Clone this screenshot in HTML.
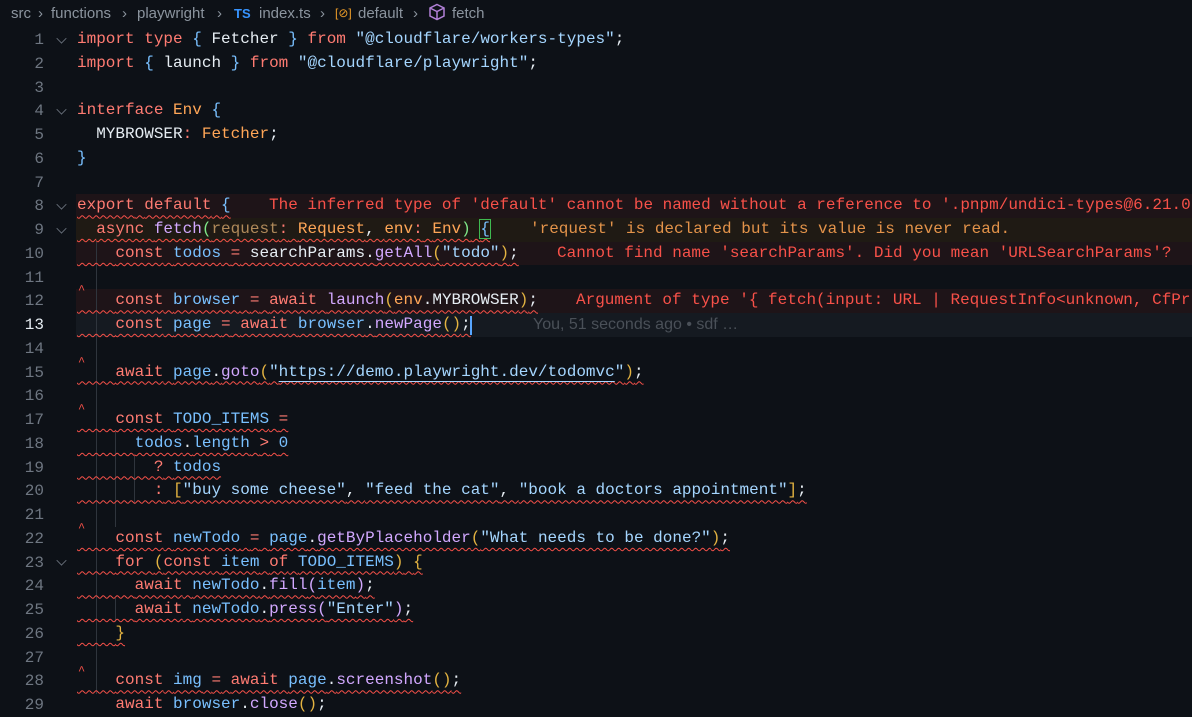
<!DOCTYPE html>
<html><head><meta charset="utf-8"><style>
body{margin:0;width:1192px;height:700px;overflow:hidden;background:#0d1117;font-family:"Liberation Mono",monospace;}
.bc{position:absolute;top:0;left:0;height:26px;width:1192px;font-family:"Liberation Sans",sans-serif;font-size:15px;color:#8b949e;line-height:27px;white-space:nowrap}
.bc span{position:absolute;top:0}
#ed{position:absolute;left:0;top:2px;width:1192px;height:700px}
.ln{position:absolute;left:0;width:44px;text-align:right;color:#6e7681;font-size:16px;height:24px;line-height:24px}
.fold{position:absolute;left:57px;width:8px;height:8px;border-right:1.5px solid #6e7681;border-bottom:1.5px solid #6e7681;transform:rotate(45deg) scale(0.8,0.8)}
.row{position:absolute;left:76px;right:0;height:23.75px}
.code{position:absolute;left:77px;font-size:16px;line-height:23.75px;white-space:pre;color:#e6edf3}
.sq{text-decoration:underline wavy #f85149;text-decoration-thickness:1px;text-underline-offset:5px}
.k{color:#ff7b72}.s{color:#a5d6ff}.v{color:#79c0ff}.f{color:#d2a8ff}.t{color:#ffa657}.y{color:#e3b341}.g{color:#7ee787}.p{color:#d2a8ff}
.msg{position:absolute;font-size:16px;line-height:23.75px;white-space:pre;color:#f85149}
.guide{position:absolute;width:1px;background:#2f353d}
.car{position:absolute;font-size:12px;color:#f85149;left:78px}
</style></head><body>
<div class="bc">
<span style="left:11px">src</span><span style="left:38px">›</span>
<span style="left:51px">functions</span><span style="left:122px">›</span>
<span style="left:137px">playwright</span><span style="left:217px">›</span>
<span style="left:234px;color:#3794ff;font-weight:bold;font-size:13px">TS</span>
<span style="left:259px">index.ts</span><span style="left:320px">›</span>
<span style="left:335px;color:#ee9d28;font-size:12px">[⊘]</span>
<span style="left:358px">default</span><span style="left:413px">›</span>
<span style="left:428px"><svg width="18" height="18" viewBox="0 0 18 18" style="vertical-align:-3px"><path d="M9 1.5 L16 5 V13 L9 16.5 L2 13 V5 Z M2 5 L9 8.5 L16 5 M9 8.5 V16.5" fill="none" stroke="#b180d7" stroke-width="1.5"/></svg></span>
<span style="left:452px">fetch</span>
</div>
<div id="ed">
<div class="row" style="top:192px;background:#1e1418"></div>
<div class="row" style="top:215.75px;background:#1f1a14"></div>
<div class="row" style="top:239.5px;background:#1e1418"></div>
<div class="row" style="top:287px;background:#1e1418"></div>
<div class="row" style="top:310.75px;background:#151a21"></div>

<div class="guide" style="left:96px;top:240px;height:452px"></div>
<div class="guide" style="left:115px;top:430px;height:95px"></div>
<div class="guide" style="left:134px;top:454px;height:48px"></div>
<div class="guide" style="left:115px;top:596px;height:24px"></div>

<div class="ln" style="top:26px">1</div><div class="ln" style="top:50px">2</div><div class="ln" style="top:73.5px">3</div><div class="ln" style="top:97px">4</div><div class="ln" style="top:121px">5</div><div class="ln" style="top:145px">6</div><div class="ln" style="top:168.5px">7</div><div class="ln" style="top:192px">8</div><div class="ln" style="top:216px">9</div><div class="ln" style="top:240px">10</div><div class="ln" style="top:263.5px">11</div><div class="ln" style="top:287px">12</div><div class="ln" style="top:311px;color:#e6edf3">13</div><div class="ln" style="top:335px">14</div><div class="ln" style="top:358.5px">15</div><div class="ln" style="top:382px">16</div><div class="ln" style="top:406px">17</div><div class="ln" style="top:430px">18</div><div class="ln" style="top:453.5px">19</div><div class="ln" style="top:477px">20</div><div class="ln" style="top:501px">21</div><div class="ln" style="top:525px">22</div><div class="ln" style="top:548.5px">23</div><div class="ln" style="top:572px">24</div><div class="ln" style="top:596px">25</div><div class="ln" style="top:620px">26</div><div class="ln" style="top:643.5px">27</div><div class="ln" style="top:667px">28</div><div class="ln" style="top:691px">29</div>

<div class="fold" style="top:32px"></div><div class="fold" style="top:103px"></div><div class="fold" style="top:198px"></div><div class="fold" style="top:222px"></div><div class="fold" style="top:554px"></div>

<div class="code" style="top:26px"><span class="k">import</span> <span class="k">type</span> <span class="v">{</span> Fetcher <span class="v">}</span> <span class="k">from</span> <span class="s">"@cloudflare/workers-types"</span>;</div>
<div class="code" style="top:49.75px"><span class="k">import</span> <span class="v">{</span> launch <span class="v">}</span> <span class="k">from</span> <span class="s">"@cloudflare/playwright"</span>;</div>
<div class="code" style="top:97.25px"><span class="k">interface</span> <span class="t">Env</span> <span class="v">{</span></div>
<div class="code" style="top:121px">  MYBROWSER<span class="k">:</span> <span class="t">Fetcher</span>;</div>
<div class="code" style="top:144.75px"><span class="v">}</span></div>
<div class="code sq" style="top:192.25px"><span class="k">export</span> <span class="k">default</span> <span class="v">{</span></div>
<div class="code sq" style="top:216px">  <span class="k">async</span> <span class="f">fetch</span><span class="g">(</span><span style="color:#b08a5a">request</span><span class="k">:</span> <span class="t">Request</span>, <span class="t">env</span><span class="k">:</span> <span class="t">Env</span><span class="g">)</span> <span class="v" style="outline:1px solid #3fb950">{</span></div>
<div class="code sq" style="top:239.75px">    <span class="k">const</span> <span class="v">todos</span> <span class="k">=</span> searchParams.<span class="f">getAll</span><span class="y">(</span><span class="s">"todo"</span><span class="y">)</span>;</div>
<div class="code sq" style="top:287.25px">    <span class="k">const</span> <span class="v">browser</span> <span class="k">=</span> <span class="k">await</span> <span class="f">launch</span><span class="y">(</span><span class="t">env</span>.MYBROWSER<span class="y">)</span>;</div>
<div class="code sq" style="top:311px">    <span class="k">const</span> <span class="v">page</span> <span class="k">=</span> <span class="k">await</span> <span class="v">browser</span>.<span class="f">newPage</span><span class="y">()</span>;</div>
<div style="position:absolute;left:470px;top:314px;width:2px;height:19px;background:#58a6ff"></div>
<div class="code sq" style="top:358.5px">    <span class="k">await</span> <span class="v">page</span>.<span class="f">goto</span><span class="y">(</span><span class="s">"<u>https://demo.playwright.dev/todomvc</u>"</span><span class="y">)</span>;</div>
<div class="code sq" style="top:406px">    <span class="k">const</span> <span class="v">TODO_ITEMS</span> <span class="k">=</span></div>
<div class="code sq" style="top:429.75px">      <span class="v">todos</span>.<span class="v">length</span> <span class="k">&gt;</span> <span class="v">0</span></div>
<div class="code sq" style="top:453.5px">        <span class="k">?</span> <span class="v">todos</span></div>
<div class="code sq" style="top:477.25px">        <span class="k">:</span> <span class="y">[</span><span class="s">"buy some cheese"</span>, <span class="s">"feed the cat"</span>, <span class="s">"book a doctors appointment"</span><span class="y">]</span>;</div>
<div class="code sq" style="top:524.75px">    <span class="k">const</span> <span class="v">newTodo</span> <span class="k">=</span> <span class="v">page</span>.<span class="f">getByPlaceholder</span><span class="y">(</span><span class="s">"What needs to be done?"</span><span class="y">)</span>;</div>
<div class="code sq" style="top:548.5px">    <span class="k">for</span> <span class="y">(</span><span class="k">const</span> <span class="v">item</span> <span class="k">of</span> <span class="v">TODO_ITEMS</span><span class="y">)</span> <span class="y">{</span></div>
<div class="code sq" style="top:572.25px">      <span class="k">await</span> <span class="v">newTodo</span>.<span class="f">fill</span><span class="p">(</span><span class="v">item</span><span class="p">)</span>;</div>
<div class="code sq" style="top:596px">      <span class="k">await</span> <span class="v">newTodo</span>.<span class="f">press</span><span class="p">(</span><span class="s">"Enter"</span><span class="p">)</span>;</div>
<div class="code sq" style="top:619.75px">    <span class="y">}</span></div>
<div class="code sq" style="top:667.25px">    <span class="k">const</span> <span class="v">img</span> <span class="k">=</span> <span class="k">await</span> <span class="v">page</span>.<span class="f">screenshot</span><span class="y">()</span>;</div>
<div class="code" style="top:691px">    <span class="k">await</span> <span class="v">browser</span>.<span class="f">close</span><span class="y">()</span>;</div>

<div class="car" style="top:281px">^</div><div class="car" style="top:353px">^</div><div class="car" style="top:400px">^</div><div class="car" style="top:519px">^</div><div class="car" style="top:662px">^</div>

<div class="msg" style="left:269px;top:192.25px">The inferred type of 'default' cannot be named without a reference to '.pnpm/undici-types@6.21.0</div>
<div class="msg" style="left:530px;top:216px;color:#e3934a">'request' is declared but its value is never read.</div>
<div class="msg" style="left:557px;top:239.75px">Cannot find name 'searchParams'. Did you mean 'URLSearchParams'?</div>
<div class="msg" style="left:576px;top:287.25px">Argument of type '{ fetch(input: URL | RequestInfo&lt;unknown, CfPr</div>
<div class="msg" style="left:533px;top:311px;color:#4a5058;font-family:'Liberation Sans',sans-serif">You, 51 seconds ago • sdf …</div>
</div>
</body></html>
